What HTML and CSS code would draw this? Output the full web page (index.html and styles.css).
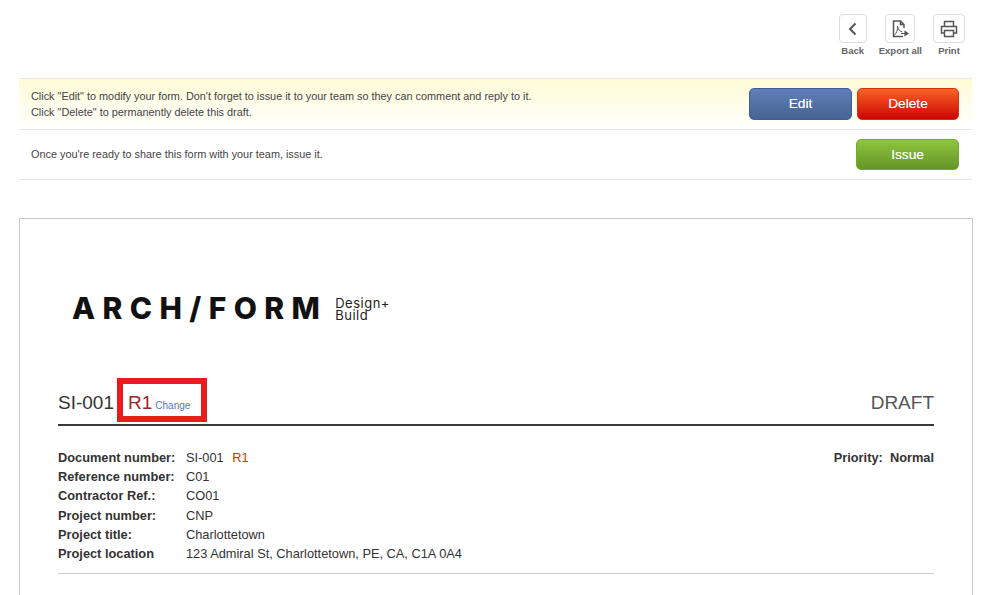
FILE: index.html
```html
<!DOCTYPE html>
<html lang="en">
<head>
<meta charset="utf-8">
<title>SI-001</title>
<link rel="stylesheet" href="styles.css">
</head>
<body>
<div class="toolbar">
  <div class="tool tool-back">
    <span class="tool-box tool-box-back"><svg width="18" height="18" viewBox="0 0 18 18"><path d="M11.500 3.500 6 9l5.500 5.500" fill="none" stroke="#555" stroke-width="2"/></svg></span>
    <span class="tool-label">Back</span>
  </div>
  <div class="tool">
    <span class="tool-box"><svg width="20" height="20" viewBox="0 0 20 20"><path d="M13 17.500H3.500V2h7l3.500 3.500V9M10.500 2v3.500H14" fill="none" stroke="#555" stroke-width="1.500"/><path d="M4 16.500C6.500 14 8 11 7.500 7c.5 3.500 2.500 5.500 5 6" fill="none" stroke="#555" stroke-width="1"/><path d="M11 14.500h4M15 12.500l3 2-3 2z" fill="#555" stroke="#555" stroke-width="1.200"/></svg></span>
    <span class="tool-label">Export all</span>
  </div>
  <div class="tool">
    <span class="tool-box tool-box-print"><svg width="20" height="20" viewBox="0 0 20 20"><path d="M5.500 7V2.500h9V7M5.500 14H2.500V7.500h15V14h-3" fill="none" stroke="#555" stroke-width="1.500"/><path d="M5.500 11.500h9v6h-9z" fill="none" stroke="#555" stroke-width="1.500"/></svg></span>
    <span class="tool-label">Print</span>
  </div>
</div>

<div class="actions">
  <div class="action-row action-row-draft">
    <p class="action-text">Click "Edit" to modify your form. Don't forget to issue it to your team so they can comment and reply to it.<br>Click "Delete" to permanently delete this draft.</p>
    <div class="action-buttons">
      <button class="btn btn-edit">Edit</button>
      <button class="btn btn-delete">Delete</button>
    </div>
  </div>
  <div class="action-row action-row-issue">
    <p class="action-text">Once you're ready to share this form with your team, issue it.</p>
    <div class="action-buttons">
      <button class="btn btn-issue">Issue</button>
    </div>
  </div>
</div>

<main class="sheet">
  <div class="logo">
    <span class="logo-main">ARCH/FORM</span>
    <span class="logo-sub">Design+<br>Build</span>
  </div>

  <div class="doc-head">
    <div class="doc-title">
      <span class="doc-number">SI-001</span>
      <span class="rev-highlight"><span class="rev">R1</span><a class="change" href="#">Change</a></span>
    </div>
    <div class="doc-status">DRAFT</div>
  </div>

  <div class="meta">
    <div class="meta-grid">
      <div class="meta-label">Document number:</div><div class="meta-value">SI-001 <span class="meta-rev">R1</span></div>
      <div class="meta-label">Reference number:</div><div class="meta-value">C01</div>
      <div class="meta-label">Contractor Ref.:</div><div class="meta-value">CO01</div>
      <div class="meta-label">Project number:</div><div class="meta-value">CNP</div>
      <div class="meta-label">Project title:</div><div class="meta-value">Charlottetown</div>
      <div class="meta-label">Project location</div><div class="meta-value">123 Admiral St, Charlottetown, PE, CA, C1A 0A4</div>
    </div>
    <div class="priority">Priority:&nbsp; Normal</div>
  </div>
</main>
</body>
</html>
```
FILE: styles.css
```css
* { box-sizing: border-box; }
html, body { margin: 0; padding: 0; }
body {
  background: #fff;
  font-family: "Liberation Sans", Arial, sans-serif;
  color: #333;
  height: 595px;
  overflow: hidden;
}
.toolbar {
  display: flex;
  justify-content: flex-end;
  gap: 11px;
  height: 78px;
  padding: 14px 17px 0 0;
}
.tool {
  display: flex;
  flex-direction: column;
  align-items: center;
}
.tool-back { margin-right: 1px; }
.tool-box {
  display: flex;
  align-items: center;
  justify-content: center;
  width: 30px;
  height: 29px;
  border: 1px solid #ddd;
  border-radius: 4px;
}
.tool-box-back { width: 28px; }
.tool-box-print { width: 32px; }
.tool-label {
  margin-top: 2px;
  font-size: 9.500px;
  font-weight: bold;
  line-height: 12px;
  color: #666;
  white-space: nowrap;
}
.actions { margin: 0 10px 0 19px; }
.action-row {
  display: flex;
  align-items: center;
  justify-content: space-between;
  padding: 0 13px 0 12px;
  border-top: 1px solid #e6e6e6;
}
.action-row-draft {
  height: 51px;
  background: linear-gradient(#fffbd6, #fff);
}
.action-row-issue {
  height: 51px;
  padding-bottom: 1px;
  border-bottom: 1px solid #e6e6e6;
}
.action-text {
  margin: 0;
  font-size: 10.870px;
  line-height: 16px;
  color: #444;
}
.action-buttons { display: flex; gap: 5px; }
.btn {
  height: 32px;
  padding: 0 0 1px;
  border-radius: 5px;
  color: #fff;
  font: 13.700px "Liberation Sans", Arial, sans-serif;
  text-shadow: 0 0 .6px rgba(255, 255, 255, .7);
}
.btn-edit { width: 103px; border: 1px solid #3e5e9a; background: linear-gradient(#5f7fb8, #486393); }
.btn-delete { width: 102px; border: 1px solid #d9300f; background: linear-gradient(#f76423, #cc0505); }
.btn-issue { width: 103px; height: 31px; padding: 0; border: 1px solid #6fae2c; background: linear-gradient(#8ec63f, #669427); }
.sheet {
  width: 954px;
  height: 400px;
  margin: 38px 0 0 19px;
  padding: 0 38px;
  border: 1px solid #c8c8c8;
  border-bottom: 0;
}
.logo {
  display: flex;
  align-items: center;
  height: 36px;
  margin: 71px 0 0 14px;
}
.logo-main {
  font-family: Inter, "Liberation Sans", sans-serif;
  font-size: 30px;
  font-weight: 800;
  letter-spacing: 7.400px;
  color: #111;
  white-space: nowrap;
}
.logo-sub {
  margin: 1px 0 0 8px;
  font-family: Inter, "Liberation Sans", sans-serif;
  font-size: 13px;
  line-height: 12px;
  letter-spacing: .5px;
  color: #222;
}
.doc-head {
  display: flex;
  align-items: flex-end;
  justify-content: space-between;
  height: 48px;
  margin-top: 52px;
  padding-bottom: 10px;
  border-bottom: 2px solid #3a3a3a;
}
.doc-title { display: flex; align-items: flex-end; }
.doc-number { font-size: 19px; line-height: 23px; color: #333; }
.rev-highlight {
  display: flex;
  align-items: baseline;
  gap: 3px;
  flex: none;
  width: 90px;
  height: 44px;
  margin: 0 0 -8px 3px;
  padding: 7px 0 0 5px;
  border: 6px solid #e81c1c;
  line-height: 23px;
}
.rev { font-size: 19px; color: #98282c; }
.change {
  font-size: 10px;
  color: #5b74c0;
  text-decoration: none;
}
.doc-status { font-size: 19px; line-height: 23px; color: #555; }
.meta {
  display: flex;
  justify-content: space-between;
  align-items: flex-start;
  margin-top: 22px;
  padding-bottom: 10px;
  border-bottom: 1px solid #ccc;
  font-size: 12.800px;
}
.meta-grid {
  display: grid;
  grid-template-columns: 128px auto;
  grid-auto-rows: 19.200px;
  line-height: 19px;
}
.meta-label { font-weight: bold; color: #333; }
.meta-value { color: #333; }
.meta-rev { margin-left: 5px; color: #b84400; }
.priority { font-weight: bold; line-height: 19px; color: #333; }
```
